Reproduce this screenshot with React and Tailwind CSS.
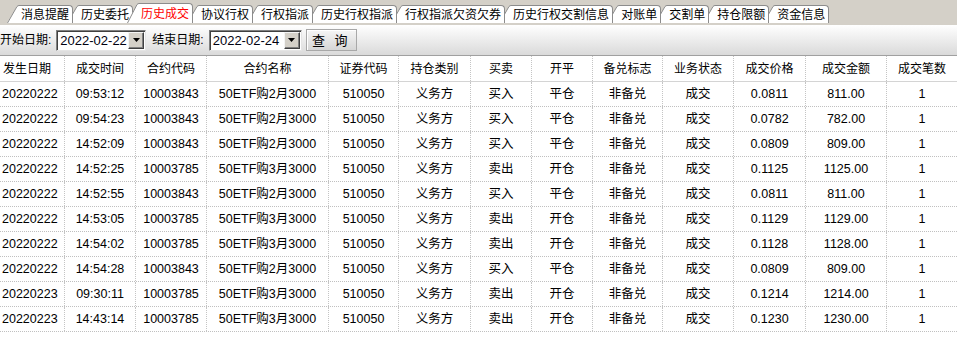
import React from "react";

const tabs = [
  "消息提醒",
  "历史委托",
  "历史成交",
  "协议行权",
  "行权指派",
  "历史行权指派",
  "行权指派欠资欠券",
  "历史行权交割信息",
  "对账单",
  "交割单",
  "持仓限额",
  "资金信息",
];
const ACTIVE_TAB = 2;

const headers = [
  "发生日期",
  "成交时间",
  "合约代码",
  "合约名称",
  "证券代码",
  "持仓类别",
  "买卖",
  "开平",
  "备兑标志",
  "业务状态",
  "成交价格",
  "成交金额",
  "成交笔数",
];

const rows = [
  ["20220222", "09:53:12", "10003843", "50ETF购2月3000", "买入", "平仓", "0.0811", "811.00"],
  ["20220222", "09:54:23", "10003843", "50ETF购2月3000", "买入", "平仓", "0.0782", "782.00"],
  ["20220222", "14:52:09", "10003843", "50ETF购2月3000", "买入", "平仓", "0.0809", "809.00"],
  ["20220222", "14:52:25", "10003785", "50ETF购3月3000", "卖出", "开仓", "0.1125", "1125.00"],
  ["20220222", "14:52:55", "10003843", "50ETF购2月3000", "买入", "平仓", "0.0811", "811.00"],
  ["20220222", "14:53:05", "10003785", "50ETF购3月3000", "卖出", "开仓", "0.1129", "1129.00"],
  ["20220222", "14:54:02", "10003785", "50ETF购3月3000", "卖出", "开仓", "0.1128", "1128.00"],
  ["20220222", "14:54:28", "10003843", "50ETF购2月3000", "买入", "平仓", "0.0809", "809.00"],
  ["20220223", "09:30:11", "10003785", "50ETF购3月3000", "卖出", "开仓", "0.1214", "1214.00"],
  ["20220223", "14:43:14", "10003785", "50ETF购3月3000", "卖出", "开仓", "0.1230", "1230.00"],
];

const gridCols =
  "grid grid-cols-[65px_71px_71px_122px_70px_72px_61px_61px_70px_71px_72px_81px_70px]";

function Tab({ label, index }) {
  const active = index === ACTIVE_TAB;
  const h = active ? 20 : 18;
  return (
    <div
      className={`relative flex ${index === 0 ? "ml-[7px]" : "-ml-[6px]"} ${
        active ? "h-[20px]" : "h-[18px]"
      }`}
      style={{ zIndex: active ? 50 : 20 - index }}
    >
      <svg width="12" height={h} className="block shrink-0">
        <path d={`M0 ${h} L10 1.5 Q11 0.5 12 0.5 L12 ${h} Z`} fill="#fff" />
        <path d={`M0.5 ${h} L10 1.5 Q11 0.5 12 0.5`} fill="none" stroke="#8c8c8c" />
      </svg>
      <div
        className={`flex items-center rounded-tr-[4px] border-t border-r border-[#8c8c8c] bg-white pr-[3px] pl-[2px] text-[12px] leading-none ${
          active ? "text-[#ff0000]" : "text-black"
        }`}
      >
        {label}
      </div>
    </div>
  );
}

function DateCombo({ value, width }) {
  return (
    <div
      className={`ml-[5px] flex h-[21px] items-center border border-t-[#808080] border-l-[#808080] border-r-[#e4e4e4] border-b-[#e4e4e4] bg-white shadow-[inset_1px_1px_0_#404040] ${width}`}
    >
      <span className="pl-[3px] text-[13px] leading-none text-[#000010]">{value}</span>
      <div className="mr-[1px] ml-auto flex h-[17px] w-[16px] items-center justify-center border border-t-[#f4f4f4] border-l-[#f4f4f4] border-r-[#404040] border-b-[#404040] bg-[#d4d0c8] shadow-[inset_-1px_-1px_0_#808080]">
        <svg width="7" height="4" className="block">
          <path d="M0 0 H7 L3.5 4 Z" fill="#000" />
        </svg>
      </div>
    </div>
  );
}

export default function App() {
  return (
    <div className="h-[342px] w-[957px] overflow-hidden bg-white font-['Liberation_Sans','Noto_Sans_CJK_SC',sans-serif] text-black">
      {/* 标签页 */}
      <div className="flex h-[25px] items-end bg-[#d4d0c8] pb-[2px]">
        {tabs.map((t, i) => (
          <Tab key={t} label={t} index={i} />
        ))}
      </div>

      {/* 查询条件 */}
      <div className="flex h-[31px] items-center border-b border-[#a0a0a0] bg-linear-to-b from-white to-[#dadada] text-[12px]">
        <span>开始日期:</span>
        <DateCombo value="2022-02-22" width="w-[90px]" />
        <span className="ml-[6px]">结束日期:</span>
        <DateCombo value="2022-02-24" width="w-[93px]" />
        <button className="ml-[4px] h-[22px] w-[51px] border border-[#a8a8a8] bg-linear-to-b from-[#f6f6f6] to-[#d6d6d6] text-[13px] leading-none tracking-[3px] text-black shadow-[inset_1px_1px_0_#ffffff]">
          查 询
        </button>
      </div>

      {/* 表头 */}
      <div className={`${gridCols} h-[26px] border-b border-[#d4d4d4] text-[12px]`}>
        {headers.map((h, i) => (
          <div
            key={h}
            className={`flex items-center ${
              i === 0 ? "justify-start pl-[3px]" : "justify-center"
            } ${i < headers.length - 1 ? "border-r border-dotted border-[#c4c4c4]" : ""}`}
          >
            {h}
          </div>
        ))}
      </div>

      {/* 数据 */}
      {rows.map((r, ri) => {
        const cells = [r[0], r[1], r[2], r[3], "510050", "义务方", r[4], r[5], "非备兑", "成交", r[6], r[7], "1"];
        return (
          <div
            key={ri}
            className={`${gridCols} h-[25px] border-b border-dotted border-[#c0c0c0] text-[12.5px] leading-none`}
          >
            {cells.map((c, ci) => (
              <div
                key={ci}
                className={`flex items-center ${
                  ci === 0 ? "justify-start pl-[2px]" : "justify-center"
                } ${ci < cells.length - 1 ? "border-r border-dotted border-[#c4c4c4]" : ""}`}
              >
                {c}
              </div>
            ))}
          </div>
        );
      })}
    </div>
  );
}
